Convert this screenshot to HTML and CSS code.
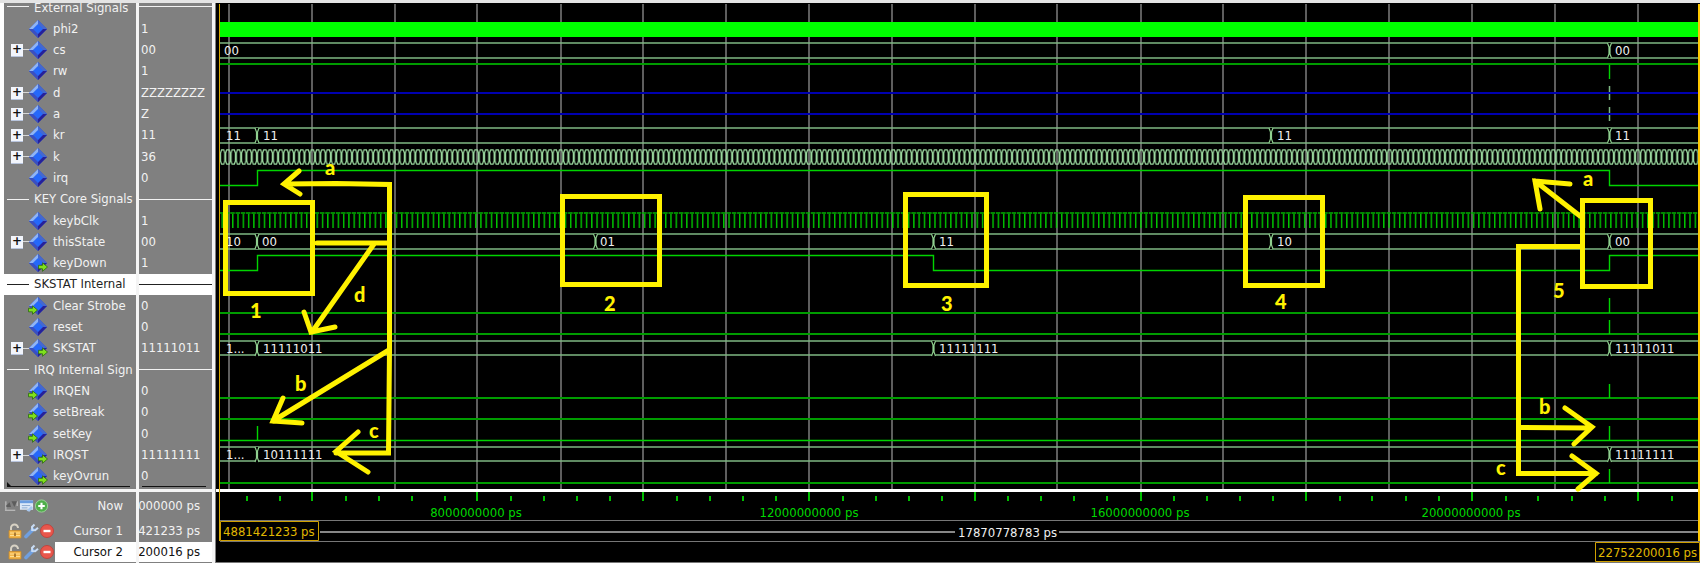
FILE: index.html
```html
<!DOCTYPE html>
<html lang="en">
<head>
<meta charset="utf-8">
<title>Wave</title>
<link rel="stylesheet" href="styles.css">
</head>
<body>
<svg class="defs" aria-hidden="true">
  <defs>
    <symbol id="sig" viewBox="0 0 20 20">
      <path d="M10 1 19 10 10 19 1 10Z" fill="#2b4fc8"/>
      <path d="M10 1 1 10H5.500L10 5.500Z" fill="#8fb4f4"/>
      <path d="M10 1 19 10H14.500L10 5.500Z" fill="#4468d0"/>
      <path d="M1 10 10 19V14.500L5.500 10Z" fill="#3b4fc0"/>
      <path d="M19 10 10 19V14.500L14.500 10Z" fill="#26209a"/>
      <path d="M10 5 15 10 10 15 5 10Z" fill="#2568fa"/>
    </symbol>
    <symbol id="arr" viewBox="0 0 10 10">
      <path d="M.5 3.300H4.500V.8L9.500 5 4.500 9.300V6.800H.5Z" fill="#7fe01c" stroke="#2c6a10" stroke-width=".8"/>
    </symbol>
    <symbol id="sig-out" viewBox="0 0 20 20"><use href="#sig" width="20" height="20"/><use href="#arr" x="10" y="9" width="10" height="10"/></symbol>
    <symbol id="sig-in" viewBox="0 0 20 20"><use href="#sig" width="20" height="20"/><use href="#arr" x="0" y="9" width="10" height="10"/></symbol>
    <symbol id="lock" viewBox="0 0 16 16">
      <path d="M4 8V5a3.500 3.500 0 0 1 7 0" fill="none" stroke="#d8d2c4" stroke-width="2"/>
      <path d="M2 7.500H14V15H2Z" fill="#f3b64a" stroke="#c98a2c" stroke-width=".8"/>
      <path d="M3 10H13M3 12.500H13" stroke="#ffdf92"/>
      <path d="M7.300 9.500H8.700V13H7.300Z" fill="#8a5a1c"/>
    </symbol>
    <symbol id="wrench" viewBox="0 0 16 16">
      <path d="M3 13.500 10 6.500" stroke="#6f9fe0" stroke-width="3.600" stroke-linecap="round"/>
      <path d="M11.500 1.500 9 4 9.200 7 12.200 7.200 15 4.700" fill="none" stroke="#c9dcf4" stroke-width="2"/>
    </symbol>
    <symbol id="minus" viewBox="0 0 16 16"><circle cx="8" cy="8" r="6.500" fill="#e8564c" stroke="#c23a34" stroke-width=".8"/><path d="M4.500 8H11.500" stroke="#fff" stroke-width="2.400"/></symbol>
    <symbol id="plus" viewBox="0 0 16 16"><circle cx="8" cy="8" r="6.500" fill="#4fae4a" stroke="#9ad596" stroke-width="1"/><path d="M4.500 8H11.500M8 4.500V11.500" stroke="#fff" stroke-width="2.200"/></symbol>
    <symbol id="caliper" viewBox="0 0 16 16"><path d="M2 3V12M14 3V8M1 12.500H12" stroke="#cfcfcf" stroke-width="1"/><path d="M2 8 6 4 7.500 9H3ZM8 3H14L11 9Z" fill="#5c5c5c"/></symbol>
    <symbol id="sheet" viewBox="0 0 16 16"><path d="M1 2H15V12H1Z" fill="#dce8f8"/><path d="M1 2H15V5H1Z" fill="#6a9ce0"/><path d="M3 7.500H12M3 10H9" stroke="#8aa8d0"/><path d="M8 13 13 8 15 10 11 14Z" fill="#a8c8f0"/></symbol>
  </defs>
</svg>

<main class="wave-window">
  <ul class="pane names">
    <li class="group">External Signals</li>
    <li><svg><use href="#sig"/></svg>phi2</li>
    <li><button type="button" aria-label="Expand cs">+</button><svg><use href="#sig"/></svg>cs</li>
    <li><svg><use href="#sig"/></svg>rw</li>
    <li><button type="button" aria-label="Expand d">+</button><svg><use href="#sig"/></svg>d</li>
    <li><button type="button" aria-label="Expand a">+</button><svg><use href="#sig"/></svg>a</li>
    <li><button type="button" aria-label="Expand kr">+</button><svg><use href="#sig"/></svg>kr</li>
    <li><button type="button" aria-label="Expand k">+</button><svg><use href="#sig"/></svg>k</li>
    <li><svg><use href="#sig"/></svg>irq</li>
    <li class="group">KEY Core Signals</li>
    <li><svg><use href="#sig"/></svg>keybClk</li>
    <li><button type="button" aria-label="Expand thisState">+</button><svg><use href="#sig"/></svg>thisState</li>
    <li><svg><use href="#sig-out"/></svg>keyDown</li>
    <li class="group selected">SKSTAT Internal</li>
    <li><svg><use href="#sig-in"/></svg>Clear Strobe</li>
    <li><svg><use href="#sig"/></svg>reset</li>
    <li><button type="button" aria-label="Expand SKSTAT">+</button><svg><use href="#sig-out"/></svg>SKSTAT</li>
    <li class="group">IRQ Internal Sign</li>
    <li><svg><use href="#sig-in"/></svg>IRQEN</li>
    <li><svg><use href="#sig-in"/></svg>setBreak</li>
    <li><svg><use href="#sig-in"/></svg>setKey</li>
    <li><button type="button" aria-label="Expand IRQST">+</button><svg><use href="#sig-out"/></svg>IRQST</li>
    <li class="last"><svg><use href="#sig-out"/></svg>keyOvrun</li>
  </ul>

  <ul class="pane values">
    <li class="rule"></li>
    <li>1</li>
    <li>00</li>
    <li>1</li>
    <li>ZZZZZZZZ</li>
    <li>Z</li>
    <li>11</li>
    <li>36</li>
    <li>0</li>
    <li class="rule"></li>
    <li>1</li>
    <li>00</li>
    <li>1</li>
    <li class="rule selected"></li>
    <li>0</li>
    <li>0</li>
    <li>11111011</li>
    <li class="rule"></li>
    <li>0</li>
    <li>0</li>
    <li>0</li>
    <li>11111111</li>
    <li class="last">0</li>
  </ul>

  <section class="cursors">
    <div class="cursor now">
      <svg><use href="#caliper"/></svg><svg><use href="#sheet"/></svg><svg><use href="#plus"/></svg>
      <span>Now</span>
    </div>
    <div class="cursor">
      <svg><use href="#lock"/></svg><svg><use href="#wrench"/></svg><svg><use href="#minus"/></svg>
      <span>Cursor 1</span>
    </div>
    <div class="cursor active">
      <svg><use href="#lock"/></svg><svg><use href="#wrench"/></svg><svg><use href="#minus"/></svg>
      <span>Cursor 2</span>
    </div>
  </section>

  <section class="cursor-values">
    <div><span>000000 ps</span></div>
    <div><span>421233 ps</span></div>
    <div class="active"><span>200016 ps</span></div>
  </section>

  <section class="plot">
    <svg class="canvas" viewBox="216 3 1484 560" preserveAspectRatio="xMinYMin slice">
      <defs>
        <pattern id="eyes" x="220" y="149" width="5.280" height="16" patternUnits="userSpaceOnUse"><path d="M1.500.8H3.800L4.800 4V12L3.800 15.200H1.500L.5 12V4Z" fill="none" stroke="#9ad89e" stroke-width="1.200"/></pattern>
        <pattern id="clock" x="225" y="212" width="5.280" height="16" patternUnits="userSpaceOnUse"><path d="M0 1H4.500" stroke="#00b400" stroke-width="1.500"/><path d="M2.500 2V16" stroke="#00dc00" stroke-width="1.300"/></pattern>
        <g id="flip"><path d="M-2 0H2V15H-2Z" fill="#000"/><path d="M-2 0-.5 4V11L-2 15M2 0 .5 4V11L2 15" fill="none" stroke="#8fd08f" stroke-width="1.200"/></g>
      </defs>
      <path d="M216 3H1700V563H216Z" fill="#000"/>
      <path d="M229 4V489M312 4V489M395 4V489M477 4V489M561 4V489M643 4V489M726 4V489M809 4V489M892 4V489M975 4V489M1057 4V489M1141 4V489M1223 4V489M1306 4V489M1389 4V489M1472 4V489M1555 4V489M1638 4V489" stroke="#5e5e5e" stroke-width="2"/>

      <g class="bus">
        <path d="M220 43H1700M220 58H1700M220 128H1700M220 143H1700M220 234H1700M220 249H1700M220 341H1700M220 355H1700M220 447H1700M220 461H1700"/>
        <path d="M1609.500 86V100M1609.500 107V121"/>
      </g>
      <path class="hiz" d="M220 93H1700M220 114H1700"/>
      <path d="M220 22H1700V37H220Z" fill="#00ff00"/>
      <path d="M220 149H1700V165H220Z" fill="url(#eyes)"/>
      <path d="M220 212H1700V228H220Z" fill="url(#clock)"/>
      <g class="bit dim">
        <path d="M220 64H1700M220 313H1700M220 334H1700M220 398H1700M220 419H1700M220 483H1700"/>
      </g>
      <g class="bit">
        <path d="M220 440.500H1700"/>
        <path d="M220 185.500H257.500V170.500H1609.500V185.500H1700"/>
        <path d="M220 270.500H257.500V255.500H933.500V270.500H1609.500V255.500H1700"/>
        <path d="M257.500 426V440M1609.500 65V79M1609.500 298V313M1609.500 320V334M1609.500 384V398M1609.500 426V440M1609.500 469V483"/>
      </g>
      <g>
        <use href="#flip" x="1609.500" y="43"/>
        <use href="#flip" x="257" y="128"/><use href="#flip" x="1271" y="128"/><use href="#flip" x="1609.500" y="128"/>
        <use href="#flip" x="257" y="234"/><use href="#flip" x="595.500" y="234"/><use href="#flip" x="933.500" y="234"/><use href="#flip" x="1271" y="234"/><use href="#flip" x="1609.500" y="234"/>
        <use href="#flip" x="257" y="341"/><use href="#flip" x="933.500" y="341"/><use href="#flip" x="1609.500" y="341"/>
        <use href="#flip" x="257" y="447"/><use href="#flip" x="1609.500" y="447"/>
      </g>
      <g class="label">
        <text x="224" y="55">00</text><text x="1615" y="55">00</text>
        <text x="226" y="140">11</text><text x="263" y="140">11</text><text x="1277" y="140">11</text><text x="1615" y="140">11</text>
        <text x="226" y="246">10</text><text x="262" y="246">00</text><text x="600" y="246">01</text><text x="939" y="246">11</text><text x="1277" y="246">10</text><text x="1615" y="246">00</text>
        <text x="226" y="353">1...</text><text x="263" y="353">11111011</text><text x="939" y="353">11111111</text><text x="1615" y="353">11111011</text>
        <text x="226" y="459">1...</text><text x="263" y="459">10111111</text><text x="1615" y="459">11111111</text>
      </g>

      <path d="M216 489H1700V492H216Z" fill="#fff"/>
      <path class="ticks" d="M247 496V501M280 496V501M346 496V501M379 496V501M412 496V501M445 496V501M511 496V501M544 496V501M577 496V501M610 496V501M677 496V501M710 496V501M743 496V501M776 496V501M843 496V501M876 496V501M909 496V501M942 496V501M1008 496V501M1041 496V501M1074 496V501M1107 496V501M1174 496V501M1207 496V501M1240 496V501M1273 496V501M1340 496V501M1372 496V501M1406 496V501M1439 496V501M1506 496V501M1538 496V501M1572 496V501M1605 496V501M1672 496V501"/>
      <path class="ticks" d="M312 492V501M477 492V501M643 492V501M809 492V501M975 492V501M1141 492V501M1306 492V501M1472 492V501M1638 492V501"/>
      <g class="label time">
        <text x="476" y="517">8000000000 ps</text>
        <text x="809" y="517">12000000000 ps</text>
        <text x="1140" y="517">16000000000 ps</text>
        <text x="1471" y="517">20000000000 ps</text>
      </g>
      <path d="M220 520.500H1700M220 541.500H1700M216 562.500H1700" stroke="#777"/>
      <path d="M320 532H1700" stroke="#b4b4b4" stroke-width="1.500"/>
      <path d="M955 522H1059V541H955Z" fill="#000"/>
      <g class="label"><text x="958" y="537">17870778783 ps</text></g>

      <path d="M219.500 4V541" stroke="#d8a800"/>
      <path d="M1698 4H1700V541H1698Z" fill="#ffc800"/>
      <path d="M220.500 521.500H318.500V540.500H220.500Z" class="stamp"/>
      <path d="M1595.500 542.500H1699.500V561.500H1595.500Z" class="stamp"/>
      <g class="label mark"><text x="223" y="536">4881421233 ps</text><text x="1598" y="557">22752200016 ps</text></g>

      <g class="note">
        <path d="M225.500 202.500H312.500V293.500H225.500ZM562.500 196.500H659.500V284.500H562.500ZM905.500 194.500H986.500V285.500H905.500ZM1245.500 197.500H1322.500V285.500H1245.500ZM1582.500 200.500H1650.500V286.500H1582.500Z"/>
        <path d="M317 243H389M299 171 284 184 300 194M284 184 336 183.500 389.500 184.500V350L388.500 453H336M374 244 312 332M304 312 311 332 335 327M389 350 273 421M283 398 273 421 302 423M358 432 336 451.500 368 472"/>
        <path d="M1580 216 1535 181M1570 184 1535 181 1540 209M1580 246.500H1518.500V473.500H1596M1520 427.500 1591 428M1565 408 1592 427 1574 444M1572 456 1596 473.500 1578 489"/>
      </g>
      <g class="note-text">
        <text x="325" y="175">a</text><text x="250" y="318">1</text><text x="354" y="302">d</text><text x="295" y="391">b</text><text x="369" y="438">c</text>
        <text x="604" y="311">2</text><text x="941" y="311">3</text><text x="1275" y="309">4</text><text x="1553" y="298">5</text>
        <text x="1583" y="186">a</text><text x="1539" y="414">b</text><text x="1496" y="475">c</text>
      </g>
    </svg>
  </section>
</main>
</body>
</html>
```
FILE: styles.css
```css
* {
  box-sizing: border-box;
}

body {
  margin: 0;
  background: #808080;
  color: #f2f2f2;
  font: 13px/20px "DejaVu Sans Condensed", "Noto Sans", sans-serif;
}

.defs {
  position: absolute;
  width: 0;
  height: 0;
}

.wave-window {
  display: grid;
  grid-template-columns: 139px 76px minmax(0, 1fr);
  grid-template-rows: minmax(0, 1fr) 74px;
  height: 100vh;
  border-top: 3px solid #e4e4e4;
}

.pane {
  display: grid;
  grid-template-rows: 15px repeat(22, minmax(0, 1fr));
  margin: 0;
  padding: 0 0 2px;
  list-style: none;
  overflow: hidden;
  white-space: nowrap;
  border-right: 3px solid #f4f4f4;
}

.names {
  border-left: 4px solid #fff;
}

.pane li {
  display: flex;
  align-items: center;
  min-width: 0;
}

.pane li:first-child {
  align-items: flex-end;
  line-height: 20px;
}

.names li {
  padding-left: 24px;
}

.names li svg {
  flex: none;
  width: 20px;
  height: 20px;
  margin-right: 5px;
}

.names li:has(button) {
  padding-left: 7px;
}

.names button {
  flex: none;
  width: 12px;
  height: 12px;
  padding: 0;
  border: 0;
  background: #f2f5fc;
  color: #111;
  font: bold 12px/11px "DejaVu Sans", sans-serif;
  box-shadow: 0 1px 0 #b8c4dc;
}

.names button + svg {
  margin-left: 5px;
}

.names li:has(button) {
  background: linear-gradient(#d8d8d8, #d8d8d8) 19px 50% / 7px 1px no-repeat;
}

.names .group {
  gap: 5px;
  padding-left: 3px;
}

.group::before {
  content: "";
  flex: none;
  width: 22px;
  height: 1px;
  background: currentColor;
}

.names .group:first-child::before {
  margin-bottom: 11px;
}

.names .selected,
.values .selected {
  background: #fff;
  color: #222;
}

.values li {
  padding-left: 2px;
}

.values .rule {
  padding: 0;
}

.rule::before {
  content: "";
  width: 100%;
  height: 1px;
  background: currentColor;
}

.values .rule:first-child::before {
  margin-bottom: 11px;
}

.pane .last {
  position: relative;
}

.last::after {
  content: "";
  position: absolute;
  right: 6px;
  bottom: 0;
  left: 3px;
  height: 1px;
  background: #111;
}

.names .last::before {
  content: "";
  position: absolute;
  bottom: 0;
  left: 3px;
  border-top: 5px solid transparent;
  border-left: 5px solid #111;
}

.plot {
  grid-column: 3;
  grid-row: 1 / 3;
  min-width: 0;
  overflow: hidden;
  border-left: 1px solid #808080;
}

.canvas {
  display: block;
  width: 100%;
  height: 100%;
}

.cursors,
.cursor-values {
  display: grid;
  grid-template-rows: 28px 21px 22px;
  grid-row: 2;
  border-top: 3px solid #f4f4f4;
  border-right: 3px solid #f4f4f4;
  white-space: nowrap;
}

.cursor {
  display: flex;
  align-items: center;
  padding-left: 7px;
}

.now {
  padding-left: 4px;
}

.cursor svg {
  flex: none;
  width: 16px;
  height: 16px;
}

.now svg {
  width: 15px;
}

.cursor span {
  flex: 1;
  padding-right: 13px;
  text-align: right;
}

.active span {
  background: #fff;
  color: #111;
}

.cursor-values div {
  display: flex;
  align-items: center;
  justify-content: flex-end;
  overflow: hidden;
}

.cursor-values span {
  flex: none;
  min-width: 100%;
  padding-right: 12px;
  text-align: right;
}

.bus path {
  fill: none;
  stroke: #7fb883;
  stroke-width: 1.5;
}

.hiz {
  stroke: #0000b0;
  stroke-width: 2;
}

.bit path {
  fill: none;
  stroke: #00d400;
  stroke-width: 1.4;
}

.dim path {
  stroke: #009c00;
  stroke-width: 2;
}

.ticks {
  stroke: #00c000;
  stroke-width: 2;
}

.label {
  fill: #f0f0f0;
  font: 13px "DejaVu Sans Condensed", "Noto Sans", sans-serif;
}

.time {
  fill: #00d800;
  text-anchor: middle;
}

.mark {
  fill: #e0b800;
}

.stamp {
  fill: #000;
  stroke: #d0a000;
}

.note path {
  fill: none;
  stroke: #fff200;
  stroke-width: 5;
}

.note path + path {
  stroke-linecap: round;
}

.note-text {
  fill: #fff200;
  font: 900 20px Lato, "Open Sans", sans-serif;
}
```
